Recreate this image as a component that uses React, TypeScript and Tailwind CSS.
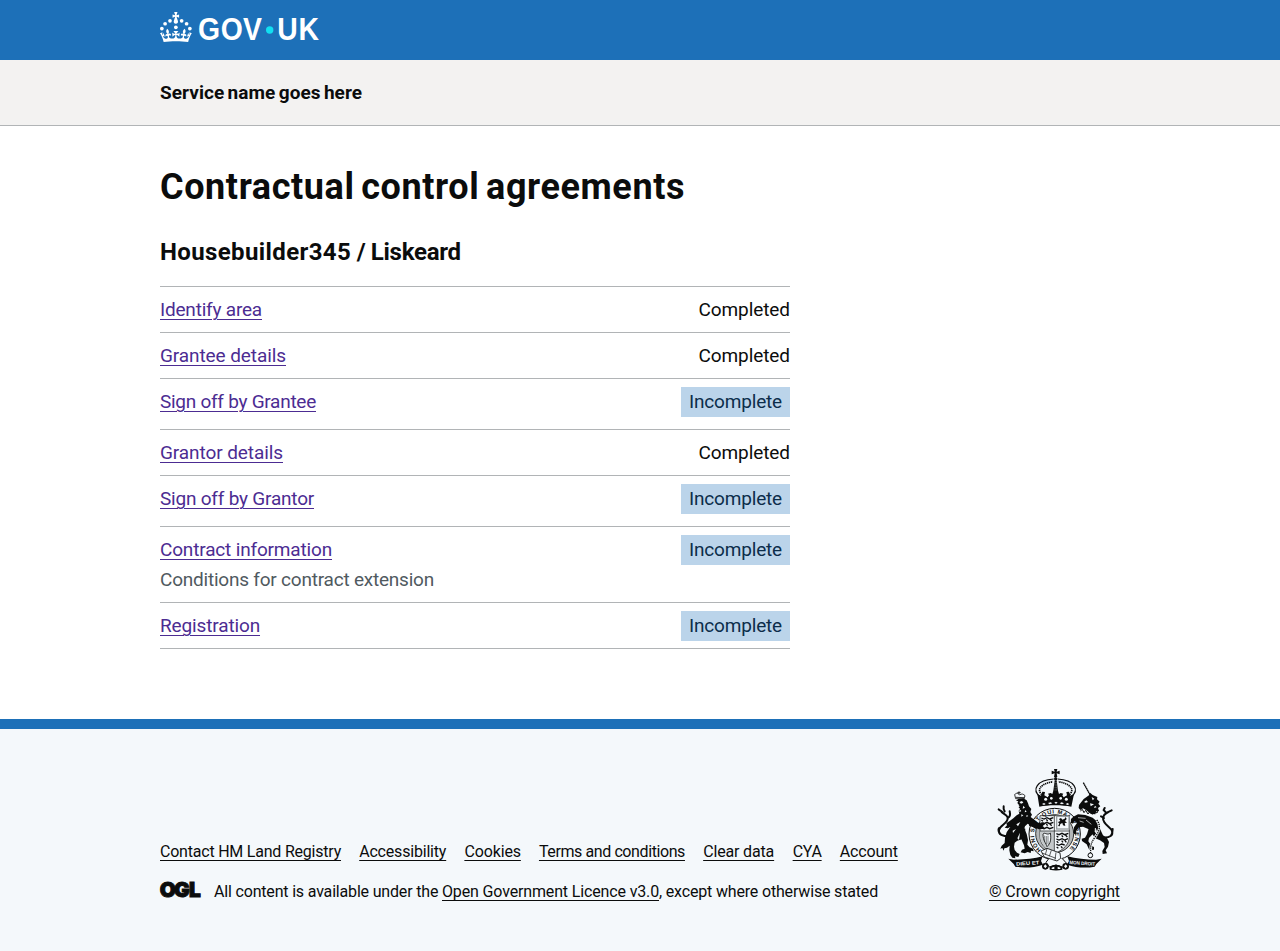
type Task = {
  name: string;
  tracking: string;
  status: 'Completed' | 'Incomplete';
  height: string;
  hint?: string;
};

const tasks: Task[] = [
  { name: 'Identify area', tracking: 'tracking-[-0.2px]', status: 'Completed', height: 'h-[46px]' },
  { name: 'Grantee details', tracking: 'tracking-[-0.087px]', status: 'Completed', height: 'h-[46px]' },
  { name: 'Sign off by Grantee', tracking: 'tracking-[-0.264px]', status: 'Incomplete', height: 'h-[51px]' },
  { name: 'Grantor details', tracking: 'tracking-[-0.083px]', status: 'Completed', height: 'h-[46px]' },
  { name: 'Sign off by Grantor', tracking: 'tracking-[-0.208px]', status: 'Incomplete', height: 'h-[51px]' },
  {
    name: 'Contract information',
    tracking: 'tracking-[-0.167px]',
    status: 'Incomplete',
    height: 'h-[76px]',
    hint: 'Conditions for contract extension',
  },
  { name: 'Registration', tracking: 'tracking-[-0.138px]', status: 'Incomplete', height: 'h-[46px]' },
];

const footerLinks = [
  { name: 'Contact HM Land Registry', style: 'tracking-[-0.218px] w-[181px]' },
  { name: 'Accessibility', style: 'tracking-[-0.195px] w-[87px]' },
  { name: 'Cookies', style: 'tracking-[-0.13px] w-[56.4px]' },
  { name: 'Terms and conditions', style: 'tracking-[-0.403px] w-[146px]' },
  { name: 'Clear data', style: 'tracking-[-0.155px] w-[71.3px]' },
  { name: 'CYA', style: 'tracking-[-0.242px] w-[29px]' },
  { name: 'Account', style: 'tracking-[-0.172px] w-[58px]' },
];

const link = 'underline decoration-1 underline-offset-[3px]';

function GovLogo() {
  return (
    <svg width="162" height="30" viewBox="0 0 324 60" fill="#fff" className="block overflow-visible" role="img" aria-label="GOV.UK">
      <circle cx="20" cy="17.6" r="3.7" />
      <circle cx="10.2" cy="23.5" r="3.7" />
      <circle cx="3.7" cy="33.2" r="3.7" />
      <circle cx="31.7" cy="30.6" r="3.7" />
      <circle cx="43.3" cy="17.6" r="3.7" />
      <circle cx="53.2" cy="23.5" r="3.7" />
      <circle cx="59.7" cy="33.2" r="3.7" />
      <path d="M33.1,9.8c.2-.1.3-.3.5-.5l4.6,2.4v-6.8l-4.6,1.5c-.1-.2-.3-.3-.5-.5l1.9-5.9h-6.7l1.9,5.9c-.2.1-.3.3-.5.5l-4.6-1.5v6.8l4.6-2.4c.1.2.3.3.5.5l-2.6,8c-.9,2.8,1.2,5.7,4.1,5.7h0c3,0,5.1-2.9,4.1-5.7l-2.6-8ZM37,37.9s-3.4,3.8-4.1,6.1c2.2,0,4.2-.5,6.4-2.8l-.7,8.5c-2-2.8-4.4-4.1-5.7-3.8.1,3.1.5,6.7,5.8,7.2,3.7.3,6.7-1.5,7-3.8.4-2.6-2-4.3-3.7-1.6-1.4-4.5,2.4-6.1,4.9-3.2-1.9-4.5-1.8-7.7,2.4-10.9,3,4,2.6,7.3-1.2,11.1,2.4-1.3,6.2,0,4,4.6-1.2-2.8-3.7-2.2-4.2.2-.3,1.7.7,3.7,3,4.2,1.9.3,4.7-.9,7-5.9-1.3,0-2.4.7-3.9,1.7l2.4-8c.6,2.3,1.4,3.7,2.2,4.5.6-1.6.5-2.8,0-5.3l5,1.8c-2.6,3.6-5.2,8.7-7.3,17.5-7.4-1.1-15.7-1.7-24.5-1.7h0c-8.8,0-17.1.6-24.5,1.7-2.1-8.9-4.7-13.9-7.3-17.5l5-1.8c-.5,2.5-.6,3.7,0,5.3.8-.8,1.6-2.3,2.2-4.5l2.4,8c-1.5-1-2.6-1.7-3.9-1.7,2.3,5,5.2,6.2,7,5.9,2.3-.4,3.3-2.4,3-4.2-.5-2.4-3-3.1-4.2-.2-2.2-4.6,1.6-6,4-4.6-3.7-3.7-4.2-7.1-1.2-11.1,4.2,3.2,4.3,6.4,2.4,10.9,2.5-2.8,6.3-1.3,4.9,3.2-1.8-2.7-4.1-1-3.7,1.6.3,2.3,3.3,4.1,7,3.8,5.4-.5,5.7-4.2,5.8-7.2-1.3-.2-3.7,1-5.7,3.8l-.7-8.5c2.2,2.3,4.2,2.7,6.4,2.8-.7-2.3-4.1-6.1-4.1-6.1h10.6Z" />
      <g transform="scale(0.9 1)" fontFamily="Liberation Sans, sans-serif" fontWeight="700" fontSize="63">
        <text x="84.5 135 184.5" y="56.8">GOV</text>
        <text x="260.5 308" y="56.8">UK</text>
      </g>
      <circle cx="219.4" cy="36" r="7.4" fill="#11e0f1" />
    </svg>
  );
}

function OglLogo() {
  return (
    <svg width="41" height="17" viewBox="0 0 41 17" className="block overflow-visible" role="img" aria-label="OGL">
      <text x="-0.2 14 29" y="15.8" fontFamily="Inter, sans-serif" fontWeight="900" fontSize="20.8" fill="#0b0c0c" stroke="#0b0c0c" strokeWidth="1">OGL</text>
    </svg>
  );
}

function Crest() {
  const dark = '#0b0c0c';
  const pale = '#f4f8fb';
  return (
    <svg width="125" height="102" viewBox="36 27 375 306" className="block" aria-hidden="true">
      {/* Crown */}
      <g fill={dark}>
        <path d="M222 27h10l-2 8 9-3v11l-9-3 2 11h-10l2-11-9 3V32l9 3z" />
        <circle cx="227" cy="56" r="5" />
        <path d="M224 61h6l4 32h-14z" />
      </g>
      <g fill="none" stroke={dark}>
        <path d="M182 112C152 88 172 60 221 57M272 112c30-24 10-52-39-55" strokeWidth="3.5" />
        <path d="M190 108C164 88 186 70 219 65M264 108c26-20 4-38-29-43" strokeWidth="5" strokeDasharray="4 2" />
        <path d="M225 66v28M229 66v28" stroke={pale} strokeWidth="1" strokeDasharray="3 2" />
      </g>
      <path d="M172 102l11 5 4-12 8 1-2 10 10 6 4-6-3-5 8-2 5 3 3-10h14l3 10 5-3 8 2-3 5 4 6 10-6-2-10 8-1 4 12 11-5-8 38c-27-6-70-6-96 0z" fill={dark} />
      <g fill={pale}>
        <circle cx="197" cy="118" r="4.5" /><circle cx="214" cy="115" r="4" /><circle cx="242" cy="115" r="4" /><circle cx="259" cy="118" r="4.5" />
        <path d="M186 132l6-3 5 3-5 3zM204 129l8-2 5 3-8 3zM223 128l5-3 5 3-5 3zM239 130l6-3 7 3-6 3zM257 132l6-3 5 4-6 2z" />
      </g>

      {/* Garter and shield */}
      <circle cx="224" cy="222" r="77" fill={pale} stroke={dark} strokeWidth="3" />
      <circle cx="224" cy="221" r="57" fill="#b4b7b9" stroke={dark} strokeWidth="2.5" />
      <path d="M180 167h88v61c0 25-16 40-44 53-28-13-44-28-44-53z" fill={pale} stroke={dark} strokeWidth="2" />
      <path d="M180 214h43v66c-26-12-43-30-43-52z" fill="#c5c9cb" />
      <path d="M223 167v113M180 213h88" stroke={dark} strokeWidth="2" />
      <path id="garter-band" d="M184 270A62 62 0 1 1 265 269" fill="none" />
      <text fontFamily="Liberation Sans, sans-serif" fontWeight="700" fontSize="17" fill={dark}>
        <textPath href="#garter-band" textLength="296" lengthAdjust="spacing">HONI SOIT QUI MAL Y PENSE</textPath>
      </text>
      <g fill="none" stroke={dark} strokeWidth="4">
        <path d="M184 174l8 3 9-4 8 4 11-4M184 180l5 4M199 178l4 5M210 178l5 5" />
        <path d="M184 188l8 3 9-4 8 4 11-4M184 194l5 4M199 192l4 5M210 192l5 5" />
        <path d="M184 203l8 3 9-4 8 4 11-4" />
        <path d="M229 221l8 3 9-4 8 4 11-4M230 228l5 4M245 226l4 5M257 226l5 5" />
        <path d="M229 237l8 3 9-4 8 4 10-4M230 244l5 4M245 242l4 5M255 242l4 5" />
        <path d="M229 253l8 3 8-4 9 3M230 261l5 4M243 259l4 5" />
      </g>
      <rect x="230" y="169" width="37" height="38" fill={pale} stroke="#9aa0a3" strokeWidth="4" />
      <path d="M237 177l6-3 4 5 7-3 3-5 3 6-5 6 6 5-7 1 2 9-7-2-2-7-6 3-2 7-5-1 4-7-4-5 7-3z" fill={dark} />
      <path d="M189 222c5-7 13 6 22-3 3 18 1 31-10 41-3-12-12-16-12-38z" fill={pale} stroke={dark} strokeWidth="2.5" />
      <path d="M194 227v19M199 228v24M204 227v26" stroke={dark} strokeWidth="1.5" />

      {/* Lion */}
      <g fill={dark}>
        <path d="M108 122l8-6 14-1 10 6 4 9 3 9 7 8-3 9 5 8-4 7 12 9 10 8 9 2 8-3 3 7-8 3 7 5-5 5-11 1-20-8-14-9-8 8-4 13-4 9-10-4-14-10-12-6-8 4-9-2 7-7-2-6 9-6 12-9 10-9 8-5-2-9 4-6-5-5 2-6-5-6 3-5z" />
        <path d="M100 190l20 10 16 6-2 22-8 10-14 4-8 6-2 12 2 10 7 8 8 4-4 9-10-2 1 6-9-2-6-8-3-14 1-14-8 6-8 2-2 7-4-8-6 2 4-9 9-8 1-16 5-16 8-12z" />
        <path d="M118 220l16-12 6 14 4 18-2 14 7 8 10 4 2 8-8-2-1 7-9-3-9 4-12-3 4-8 8-3-2-10-6-14z" />
        <path d="M147 180l16 4 14 10-1 9-6-2-3 6-8-6-12-4z" />
      </g>
      <path d="M88 229c-20 0-34-5-31-19 3-14 28-20 26-37-1-9-12-10-18-17M68 157c-4-5-9-5-12-9M74 154c-4-6-4-10-3-15M84 174c7-4 7-12 5-20M62 202c-7 1-7 7-6 12" fill="none" stroke={dark} strokeWidth="6" strokeLinecap="round" />
      <g fill={pale}>
        <path d="M118 126l8-3 4 5-7 3zM112 136l7 2-3 5zM130 137l5 6-7 3zM119 148l5 5-6 4zM136 150l4 5-6 2zM124 163l6 3-6 4zM140 165l5 3-6 3z" />
        <path d="M109 193l12-7-7 13zM98 212l10-5-9 12zM112 235l8-17-3 22z" />
      </g>
      <g fill="none" stroke={dark} strokeWidth="2.5">
        <path d="M107 116l-3-12c5-7 11-4 15 1 5-5 12-3 16 2l-3 10zM117 94v9M112 98h10" />
        <path d="M108 112l24 1" />
      </g>

      {/* Unicorn */}
      <path d="M310 68l20 36" stroke={dark} strokeWidth="4" strokeDasharray="5 1" />
      <path d="M297 135l14-18 16-11 3-8 8 7 14 6-1 7 8 7-4 6 6 8-7 5 3 9-8 1-3 9-13-1-14-11-10-6-8 5-5-6z" fill={dark} />
      <path d="M312 126l7-5 5 5-7 2zM335 111l8 5-5 5zM330 130l12 3-10 6zM345 137l5 5-8 2z" fill={pale} />
      <path d="M301 153l6-5 5 10 5-7 7 11 6-8 7 9 6-9 8 5 4-9" stroke={dark} strokeWidth="3" fill="none" />
      <path d="M280 170l14-7 22 2 22 8 14 12 4 14-5 12-12 3-16-8-14-6-12 2-8 10-2 12-7-4 2-18 9-13-8-6-4 7-7-1 1-12z" fill={dark} />
      <path d="M340 203l16-8 7 18 6 13 12 8 6 12-3 14-7 11 4 9-13 2-1-9 7-12-2-12-12-8-14-6-10-14z" fill={dark} />
      <path d="M326 206l22 6-21 22-2 10 10 14 7 3v8l-14 1-8-17-14-10-1-7 10-3 6-10z" fill={dark} />
      <path d="M294 173l23 2M299 183l12 4M318 180l16 13M346 204l6 16-7-4z" stroke={pale} strokeWidth="2" fill={pale} />
      <path d="M366 232c25 3 34-7 30-19-3-12-27-19-27-38 0-11 8-15 16-19M378 158l-7-8 3-6M387 155l8-4M372 174l-9-5M397 216l1-9" fill="none" stroke={dark} strokeWidth="6" strokeLinecap="round" />
      <path d="M350 180c14 16 8 34-3 49s-16 23-15 43l-1 12" fill="none" stroke={pale} strokeWidth="8" />
      <path d="M350 180c14 16 8 34-3 49s-16 23-15 43l-1 12" fill="none" stroke={dark} strokeWidth="4" strokeDasharray="4 2.5" />
      <circle cx="331" cy="286" r="7" fill={pale} stroke={dark} strokeWidth="3" />

      {/* Belt and base */}
      <path d="M207 295l-9 12 10 14 20-6 21 7 10-13-13-14" fill={pale} stroke={dark} strokeWidth="3" />
      <path d="M183 273l18-8 39 14 2 16-11 8-38-12z" fill={pale} stroke={dark} strokeWidth="2.5" />
      <path d="M201 266l-5 18M214 271l-6 18M228 277l-3 22M186 279l42 16" stroke={dark} strokeWidth="2" fill="none" />
      <g fill={dark}>
        <circle cx="196" cy="319" r="10" /><circle cx="257" cy="319" r="10" />
        <path d="M209 321c11-9 27-9 38 0v8c-13 3-25 3-38 0z" />
      </g>
      <path d="M191 319l5-6 5 6-5 6zM252 319l5-6 5 6-5 6zM215 323l8-3v7h-8zM233 320l8 3v4h-8z" fill={pale} />

      {/* Motto ribbons */}
      <path d="M85 296l17 3c30 0 60-3 86-10l-5 14 6 11c-27 9-57 11-83 6l-5-8z" fill={dark} />
      <path d="M365 296l-17 3c-30 0-60-3-86-10l5 14-6 11c27 9 57 11 83 6l5-8z" fill={dark} />
      <g fontFamily="Liberation Sans, sans-serif" fontWeight="700" fontSize="15" fill={pale}>
        <text x="108" y="315" textLength="70" lengthAdjust="spacingAndGlyphs" transform="rotate(-4 142 308)">DIEU ET</text>
        <text x="268" y="315" textLength="78" lengthAdjust="spacingAndGlyphs" transform="rotate(4 308 308)">MON DROIT</text>
      </g>
    </svg>
  );
}

export default function App() {
  return (
    <div className="flex min-h-[951px] flex-col bg-white font-['Roboto','Liberation_Sans',sans-serif] text-[#0b0c0c]">
      <header>
        <div className="h-[60px] bg-[#1d70b8]">
          <div className="mx-auto w-[960px] pt-3">
            <GovLogo />
          </div>
        </div>
        <div className="h-[66px] border-b border-[#b1b4b6] bg-[#f3f2f1]">
          <div className="mx-auto w-[960px] pt-5 text-[19px] leading-[25px] font-bold tracking-[0.05px] [word-spacing:-1.4px]">Service name goes here</div>
        </div>
      </header>

      <main className="mx-auto w-[960px] grow pt-[41px]">
        <h1 className="text-[36px] leading-[40px] font-bold tracking-[0.6px] [word-spacing:-2.9px]">Contractual control agreements</h1>
        <h2 className="mt-[30px] text-[24px] leading-[30px] font-bold">
          <span className="tracking-[0.38px]">Housebuilder345</span>
          <span className="tracking-[-0.4px]"> / </span>
          <span className="tracking-[-0.27px]">Liskeard</span>
        </h2>
        <ul className="mt-[19px] w-[630px] border-t border-[#b1b4b6] text-[19px] leading-[25px]">
          {tasks.map((task) => (
            <li key={task.name} className={`flex items-start justify-between border-b border-[#b1b4b6] ${task.height}`}>
              <div className="pt-2.5">
                <a className={`${link} text-[#4c2c92] ${task.tracking}`}>{task.name}</a>
                {task.hint && <div className="mt-[5px] tracking-[-0.216px] text-[#505a5f]">{task.hint}</div>}
              </div>
              {task.status === 'Completed' ? (
                <span className="pt-2.5 tracking-[-0.082px]">Completed</span>
              ) : (
                <strong className="mt-2 h-[30px] w-[109px] bg-[#bbd4ea] px-2 pt-[2px] font-normal tracking-[-0.176px] text-[#0c2d4a]">Incomplete</strong>
              )}
            </li>
          ))}
        </ul>
      </main>

      <footer className="h-[232px] border-t-[10px] border-[#1d70b8] bg-[#f4f8fb] pt-10 text-[16px] leading-[20px]">
        <div className="mx-auto flex w-[960px] justify-between">
          <div className="pt-[73px]">
            <nav className="flex gap-[18.2px] whitespace-nowrap">
              {footerLinks.map((item) => (
                <a key={item.name} className={`${link} ${item.style}`}>{item.name}</a>
              ))}
            </nav>
            <div className="mt-5 flex">
              <div className="-mt-px w-[54px] shrink-0">
                <OglLogo />
              </div>
              <p className="whitespace-nowrap">
                <span className="tracking-[-0.177px]">All content is available under the </span>
                <a className={`${link} tracking-[-0.147px]`}>Open Government Licence v3.0</a>
                <span className="tracking-[-0.169px]">, except where otherwise stated</span>
              </p>
            </div>
          </div>
          <div className="flex w-[131px] flex-col items-center">
            <Crest />
            <a className={`${link} mt-[11px] tracking-[-0.087px] whitespace-nowrap`}>© Crown copyright</a>
          </div>
        </div>
      </footer>
    </div>
  );
}
